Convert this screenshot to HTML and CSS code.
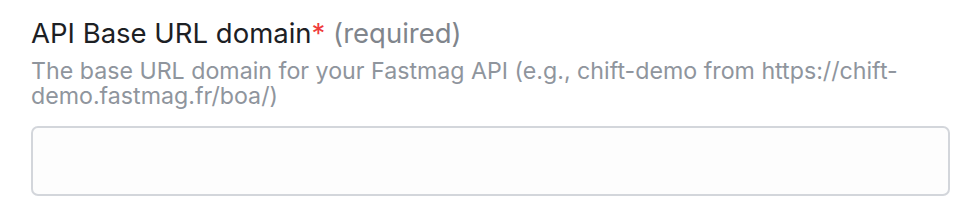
FILE: index.html
```html
<!DOCTYPE html>
<html lang="en">
<head>
  <meta charset="UTF-8" />
  <meta name="viewport" content="width=device-width, initial-scale=1.0"/>
  <title>Connection settings</title>
  <link rel="stylesheet" href="styles.css">
</head>
<body>
  <div class="field">
    <label class="field-label" for="apiDomain">API Base URL domain<span class="req-star">*</span> <span class="req-note">(required)</span></label>
    <p class="field-help">The base URL domain for your Fastmag API (e.g., chift-demo from https://chift-demo.fastmag.fr/boa/)</p>
    <input class="field-input" id="apiDomain" type="text" />
  </div>
</body>
</html>
```

FILE: styles.css
```css
html, body {
  margin: 0;
  padding: 0;
  background: #ffffff;
  font-family: 'Inter', sans-serif;
}

.field {
  padding: 16px 20px 0 31px;
}
.field-label {
  display: block;
  font-size: 27.5px;
  line-height: 34px;
  color: #1c2024;
}
.req-star {
  color: #ef3b3b;
}
.req-note {
  color: #80858c;
}
.field-help {
  margin: 9px 0 0;
  font-size: 23.2px;
  line-height: 25px;
  color: #8f959d;
}
.field-input {
  display: block;
  box-sizing: border-box;
  width: 100%;
  height: 70px;
  margin-top: 17px;
  border: 2px solid #d3d6db;
  border-radius: 7px;
  background: #fdfdfd;
  outline: none;
}
```
